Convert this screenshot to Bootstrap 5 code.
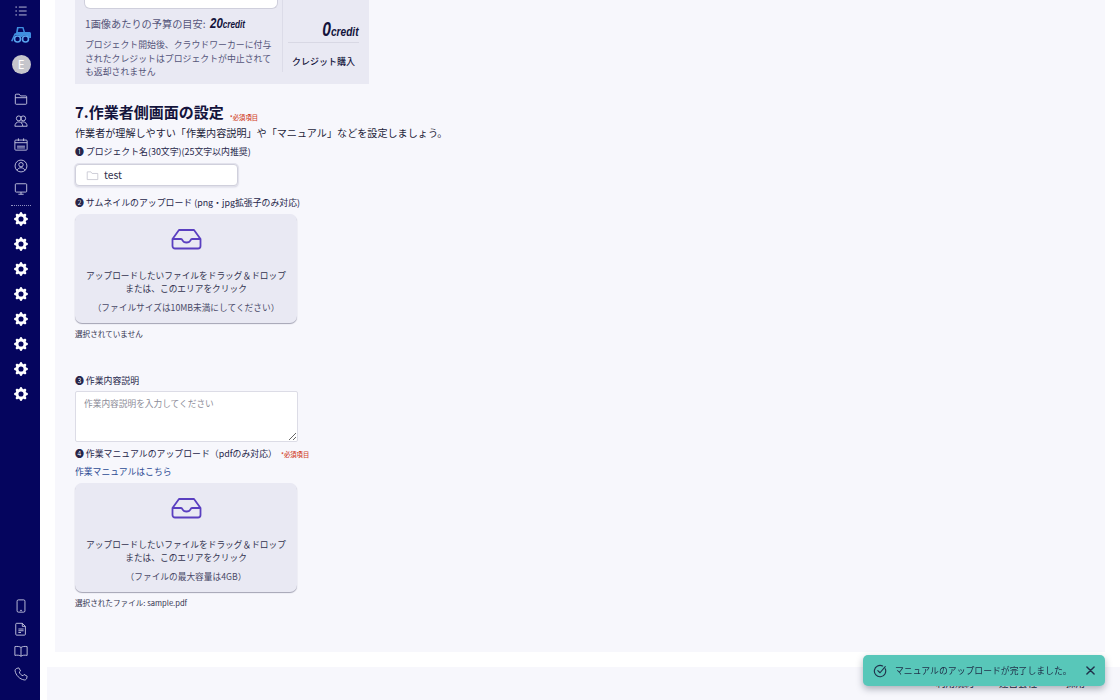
<!DOCTYPE html>
<html lang="ja">
<head>
  <meta charset="UTF-8" />
  <meta name="viewport" content="width=device-width, initial-scale=1" />
  <title>作業者側画面の設定</title>
  <link href="https://cdn.jsdelivr.net/npm/bootstrap@5.3.2/dist/css/bootstrap.min.css" rel="stylesheet" />
  <style>
    html, body { height: 700px; overflow: hidden; }
    body {
      font-family: "Noto Sans CJK JP", "Noto Sans", sans-serif;
      background: #fff;
      color: #1d1d3a;
      font-size: 10px;
    }
    .side-rail { width: 40px; height: 700px; background: #05055e; flex: none; padding-left: 2px; }
    .rail-item { height: 22.5px; }
    .rail-item svg { width: 14px; height: 14px; stroke: #cfd0e6; fill: none; stroke-width: 1; }
    .rail-gear { height: 25px; }
    .rail-gear svg { width: 14px; height: 14px; fill: #fff; }
    .rail-logo { height: 24px; }
    .rail-avatar { width: 19px; height: 19px; border-radius: 50%; background: #c6c6cc; color: #fff; font-size: 12px; line-height: 19px; text-align: center; margin: 8px auto 14px; font-family: "Noto Sans", sans-serif; flex: none; }
    .rail-dots { border-top: 1px dotted #8f90c0; width: 20px; margin: 5px auto 0; height: 0; }
    .rail-bottom { margin-top: auto; padding-bottom: 15px; }
    .page-main { min-width: 0; height: 700px; overflow: hidden; }
    .form-panel { background: #f7f7fc; height: 652px; margin: 0 15px; padding-left: 20px; }
    .credit-box { background: #e9e9f3; width: 294px; height: 84px; }
    .credit-left { width: 208px; padding: 0 5px 0 10px; border-right: 1px solid #dcdce8; height: 72px; color: #55557a; }
    .fake-input { height: 9px; background: #fff; border: 1px solid #cfcfdc; border-top: 0; border-radius: 0 0 6px 6px; width: 194px; margin-left: -1px; }
    .budget-line { font-size: 10.2px; margin-top: 5px; line-height: 18px; white-space: nowrap; }
    .budget-num, .credit-num { font-family: "Liberation Sans", sans-serif; font-weight: 700; font-style: italic; color: #14143c; }
    .budget-num { font-size: 14px; margin-left: 2px; display: inline-block; transform: scaleX(.82); transform-origin: left center; }
    .budget-num small { font-size: 10px; }
    .credit-note { font-size: 8.9px; line-height: 13.5px; margin-top: 4px; }
    .credit-right { width: 86px; height: 72px; padding: 0 10px 0 5px; }
    .credit-num { font-size: 20px; text-align: right; line-height: 24px; margin-top: 17px; padding-bottom: 1px; border-bottom: 1px solid #d8d8e4; height: 26px; }
    .credit-num span { display: inline-block; transform: scaleX(.78); transform-origin: right center; }
    .credit-num small { font-size: 13px; }
    .credit-buy { font-size: 9px; font-weight: 500; text-align: center; margin-top: 12px; color: #14143c; white-space: nowrap; }
    .sect-title { font-size: 15px; font-weight: 700; line-height: 20px; margin-top: 18px; color: #14143c; }
    .req-mark { font-size: 6.3px; font-weight: 500; color: #d2452d; line-height: 1; }
    .sect-title .req-mark { margin-left: 6px; vertical-align: -2px; }
    .sect-lead { font-size: 10.1px; line-height: 14px; margin-top: 4px; white-space: nowrap; color: #1d1d3a; }
    .field-label { font-size: 8.9px; line-height: 12px; white-space: nowrap; color: #26264a; }
    .gap-lead { margin-top: 6px; }
    .gap-name { margin-top: 11px; }
    .gap-desc { margin-top: 36px; }
    .gap-manual { margin-top: 6px; }
    .name-field { width: 163px; height: 22px; margin-top: 6px; background: #fff; border: 1px solid #d0d0dc; border-radius: 4px; box-shadow: 0 0 0 1px #e2e2ec, 0 1px 2px rgba(60,60,100,.25); padding-left: 10px; font-size: 10.3px; color: #33334f; }
    .name-field svg { width: 13px; height: 13px; stroke: #c4c4cf; fill: none; margin-right: 5px; }
    .drop-zone { width: 222px; height: 109px; margin-top: 5px; background: #e9e9f3; border-radius: 7px; box-shadow: 0 1px 1px rgba(60,60,90,.45); text-align: center; color: #33334f; font-size: 8.7px; padding-top: 14px; line-height: 13px; }
    .drop-zone svg { width: 31px; height: 22px; display: block; margin: 0 auto 19px; fill: none; stroke: #5a3fc0; stroke-width: 1.8; stroke-linejoin: round; }
    .drop-note { margin-top: 6px; color: #4a4a68; }
    .file-state { font-size: 7.6px; line-height: 11px; margin-top: 5px; color: #33334f; white-space: nowrap; }
    .desc-area { display: block; width: 223px; height: 51px; margin-top: 4px; padding: 5px 8px; font-size: 8.7px; border: 1px solid #dcdce6; border-radius: 2px; background: #fff; resize: vertical; font-family: inherit; }
    .desc-area::placeholder { color: #8c8c98; }
    .manual-link { font-size: 8.8px; line-height: 13px; margin-top: 5px; color: #2d4b94; text-decoration: none; display: block; }
    .foot-strip { background: #f7f7fc; height: 33px; margin: 15px 0 0 7px; padding: 9px 35px 0 0; font-size: 9.5px; line-height: 15px; gap: 25px; color: #1d1d3a; }
    .done-toast { position: fixed; right: 15px; top: 655px; width: 242px; height: 31px; background: #58c7b9; border-radius: 5px; box-shadow: 0 3px 7px rgba(30,40,60,.35); color: #20304a; font-size: 8.85px; padding: 0 10px 0 10px; }
    .done-toast svg { width: 14px; height: 14px; fill: none; stroke: #20304a; stroke-width: 1.3; margin-right: 8px; flex: none; }
    .done-toast .toast-x { margin-left: auto; width: 9px; height: 9px; margin-right: 0; stroke-width: 1.6; }
  </style>
</head>
<body>
<svg width="0" height="0" class="position-absolute">
  <symbol id="gear" viewBox="0 0 16 16"><path d="M9.405 1.05c-.413-1.4-2.397-1.4-2.81 0l-.1.34a1.464 1.464 0 0 1-2.105.872l-.31-.17c-1.283-.698-2.686.705-1.987 1.987l.169.311c.446.82.023 1.841-.872 2.105l-.34.1c-1.4.413-1.4 2.397 0 2.81l.34.1a1.464 1.464 0 0 1 .872 2.105l-.17.31c-.698 1.283.705 2.686 1.987 1.987l.311-.169a1.464 1.464 0 0 1 2.105.872l.1.34c.413 1.4 2.397 1.4 2.81 0l.1-.34a1.464 1.464 0 0 1 2.105-.872l.31.17c1.283.698 2.686-.705 1.987-1.987l-.169-.311a1.464 1.464 0 0 1 .872-2.105l.34-.1c1.4-.413 1.4-2.397 0-2.81l-.34-.1a1.464 1.464 0 0 1-.872-2.105l.17-.31c.698-1.283-.705-2.686-1.987-1.987l-.311.169a1.464 1.464 0 0 1-2.105-.872l-.1-.34zM8 10.93a2.929 2.929 0 1 1 0-5.86 2.929 2.929 0 0 1 0 5.858z"/></symbol>
  <symbol id="tray" viewBox="0 0 31 22"><path d="M8 2h15l6.500 9v7a2.500 2.500 0 0 1-2.500 2.500H4A2.500 2.500 0 0 1 1.500 18v-7zM1.500 11H10c1 0 1.200 .6 1.600 1.500.5 1.200 1.500 2 3.900 2s3.400-.8 3.900-2c.4-.9.6-1.500 1.600-1.500h8.500"/></symbol>
</svg>
<div class="d-flex">
  <nav class="side-rail d-flex flex-column">
    <div class="rail-item d-flex align-items-center justify-content-center">
      <svg viewBox="0 0 16 16" stroke-linecap="round"><path d="M6 3.500h8M6 8h8M6 12.500h8M2 3.500h1M2 8h1M2 12.500h1"/></svg>
    </div>
    <div class="rail-logo d-flex align-items-center justify-content-center">
      <svg width="20" height="17" viewBox="0 0 20 17"><path fill="#3f8fe0" d="M6 1h6.500l1.500 5h4.500c.8 0 1.500.7 1.500 1.500V12h-2a4 4 0 0 0-7-1H9.500A4 4 0 0 0 4 9.500L1.500 15.500 0 15 3.500 7.500 5 7zM7.500 2.300 6.800 6h5.700l-1.100-3.700z"/><circle cx="6.500" cy="13" r="3" fill="none" stroke="#5aa6ee" stroke-width="1.600"/><circle cx="14.500" cy="13" r="3" fill="none" stroke="#5aa6ee" stroke-width="1.600"/></svg>
    </div>
    <div class="rail-avatar">E</div>
    <div class="rail-item d-flex align-items-center justify-content-center">
      <svg viewBox="0 0 16 16"><path d="M1.500 13V3.500a1 1 0 0 1 1-1h3.500l1.500 2h6a1 1 0 0 1 1 1V13a1 1 0 0 1-1 1h-11a1 1 0 0 1-1-1zM1.500 6.500h13"/></svg>
    </div>
    <div class="rail-item d-flex align-items-center justify-content-center">
      <svg viewBox="0 0 16 16"><circle cx="5.500" cy="5" r="2.800"/><circle cx="10.500" cy="5" r="2.800"/><path d="M1 14c0-3 2-5 4.500-5s4.500 2 4.500 5zM8 9.500c.8-.4 1.600-.5 2.500-.5 2.500 0 4.500 2 4.500 5h-5"/></svg>
    </div>
    <div class="rail-item d-flex align-items-center justify-content-center">
      <svg viewBox="0 0 16 16"><path d="M2 3.500h12a1 1 0 0 1 1 1V14a1 1 0 0 1-1 1H2a1 1 0 0 1-1-1V4.500a1 1 0 0 1 1-1zM1 6.500h14M5 1.500v3M11 1.500v3M3.500 10.500h9M3.500 12.500h9"/></svg>
    </div>
    <div class="rail-item d-flex align-items-center justify-content-center">
      <svg viewBox="0 0 16 16"><circle cx="8" cy="8" r="6.800"/><circle cx="8" cy="6.500" r="2.500"/><path d="M3.500 13c.8-2 2.500-3 4.500-3s3.700 1 4.500 3"/></svg>
    </div>
    <div class="rail-item d-flex align-items-center justify-content-center">
      <svg viewBox="0 0 16 16"><rect x="1.500" y="2" width="13" height="9.500" rx="1"/><path d="M8 11.500V14M5 14h6"/></svg>
    </div>
    <div class="rail-dots"></div>
    <div class="rail-gear d-flex align-items-center justify-content-center"><svg><use href="#gear"/></svg></div>
    <div class="rail-gear d-flex align-items-center justify-content-center"><svg><use href="#gear"/></svg></div>
    <div class="rail-gear d-flex align-items-center justify-content-center"><svg><use href="#gear"/></svg></div>
    <div class="rail-gear d-flex align-items-center justify-content-center"><svg><use href="#gear"/></svg></div>
    <div class="rail-gear d-flex align-items-center justify-content-center"><svg><use href="#gear"/></svg></div>
    <div class="rail-gear d-flex align-items-center justify-content-center"><svg><use href="#gear"/></svg></div>
    <div class="rail-gear d-flex align-items-center justify-content-center"><svg><use href="#gear"/></svg></div>
    <div class="rail-gear d-flex align-items-center justify-content-center"><svg><use href="#gear"/></svg></div>
    <div class="rail-bottom">
      <div class="rail-item d-flex align-items-center justify-content-center">
        <svg viewBox="0 0 16 16"><rect x="3.500" y="1" width="9" height="14" rx="1.500"/><path d="M7 13h2"/></svg>
      </div>
      <div class="rail-item d-flex align-items-center justify-content-center">
        <svg viewBox="0 0 16 16"><path d="M3 1.500h6.500L13 5v9a1 1 0 0 1-1 1H3a1 1 0 0 1-1-1V2.500a1 1 0 0 1 1-1zM9.500 1.500V5H13M5 8h6M5 10h6M5 12h3"/></svg>
      </div>
      <div class="rail-item d-flex align-items-center justify-content-center">
        <svg viewBox="0 0 16 16"><path d="M8 4C6.500 2.800 4 2.500 1 3v10c3-.5 5.500-.2 7 1 1.500-1.200 4-1.500 7-1V3c-3-.5-5.500-.2-7 1zM8 4v10"/></svg>
      </div>
      <div class="rail-item d-flex align-items-center justify-content-center">
        <svg viewBox="0 0 16 16"><path d="M3.500 1.500 5.500 1l2 3.500-1.500 1.200c.5 2 2.300 3.800 4.300 4.300L11.500 8.500l3.500 2-.5 2.500c-.3 1.200-1.500 2-2.700 1.800C6.500 14 2 9.500 1.200 4.200 1 3 2.300 1.800 3.500 1.500z"/></svg>
      </div>
    </div>
  </nav>

  <main class="page-main flex-grow-1">
    <div class="form-panel">
      <div class="credit-box d-flex">
        <div class="credit-left">
          <div class="fake-input"></div>
          <div class="budget-line">1画像あたりの予算の目安: <span class="budget-num">20<small>credit</small></span></div>
          <div class="credit-note">プロジェクト開始後、クラウドワーカーに付与されたクレジットはプロジェクトが中止されても返却されません</div>
        </div>
        <div class="credit-right">
          <div class="credit-num"><span>0<small>credit</small></span></div>
          <div class="credit-buy">クレジット購入</div>
        </div>
      </div>

      <h2 class="sect-title mb-0">7.作業者側画面の設定<span class="req-mark">*必須項目</span></h2>
      <p class="sect-lead mb-0">作業者が理解しやすい「作業内容説明」や「マニュアル」などを設定しましょう。</p>

      <div class="field-label gap-lead">❶ プロジェクト名(30文字)(25文字以内推奨)</div>
      <div class="name-field d-flex align-items-center">
        <svg viewBox="0 0 16 16"><path d="M1.500 13V3.500h4.500l1.500 2h7V13z"/></svg>test
      </div>

      <div class="field-label gap-name">❷ サムネイルのアップロード (png・jpg拡張子のみ対応)</div>
      <div class="drop-zone">
        <svg><use href="#tray"/></svg>
        アップロードしたいファイルをドラッグ＆ドロップ<br>または、このエリアをクリック
        <div class="drop-note">（ファイルサイズは10MB未満にしてください）</div>
      </div>
      <div class="file-state">選択されていません</div>

      <div class="field-label gap-desc">❸ 作業内容説明</div>
      <textarea class="desc-area" placeholder="作業内容説明を入力してください"></textarea>

      <div class="field-label gap-manual">❹ 作業マニュアルのアップロード（pdfのみ対応）&nbsp; <span class="req-mark">*必須項目</span></div>
      <a class="manual-link" href="#">作業マニュアルはこちら</a>
      <div class="drop-zone">
        <svg><use href="#tray"/></svg>
        アップロードしたいファイルをドラッグ＆ドロップ<br>または、このエリアをクリック
        <div class="drop-note">（ファイルの最大容量は4GB）</div>
      </div>
      <div class="file-state">選択されたファイル: sample.pdf</div>
    </div>
    <footer class="foot-strip d-flex justify-content-end">
      <span>利用規約</span><span>運営会社</span><span class="ms-1">採用</span>
    </footer>
  </main>
</div>

<div class="done-toast d-flex align-items-center">
  <svg viewBox="0 0 16 16" stroke-linecap="round" stroke-linejoin="round"><path d="M14 5.500A6.500 6.500 0 1 1 11 2.300M5.500 7.500 8 10l6-7"/></svg>
  <span>マニュアルのアップロードが完了しました。</span>
  <svg class="toast-x" viewBox="0 0 10 10" stroke-linecap="round"><path d="M1 1l8 8M9 1l-8 8"/></svg>
</div>
<script src="https://cdn.jsdelivr.net/npm/bootstrap@5.3.2/dist/js/bootstrap.bundle.min.js"></script>
</body>
</html>
